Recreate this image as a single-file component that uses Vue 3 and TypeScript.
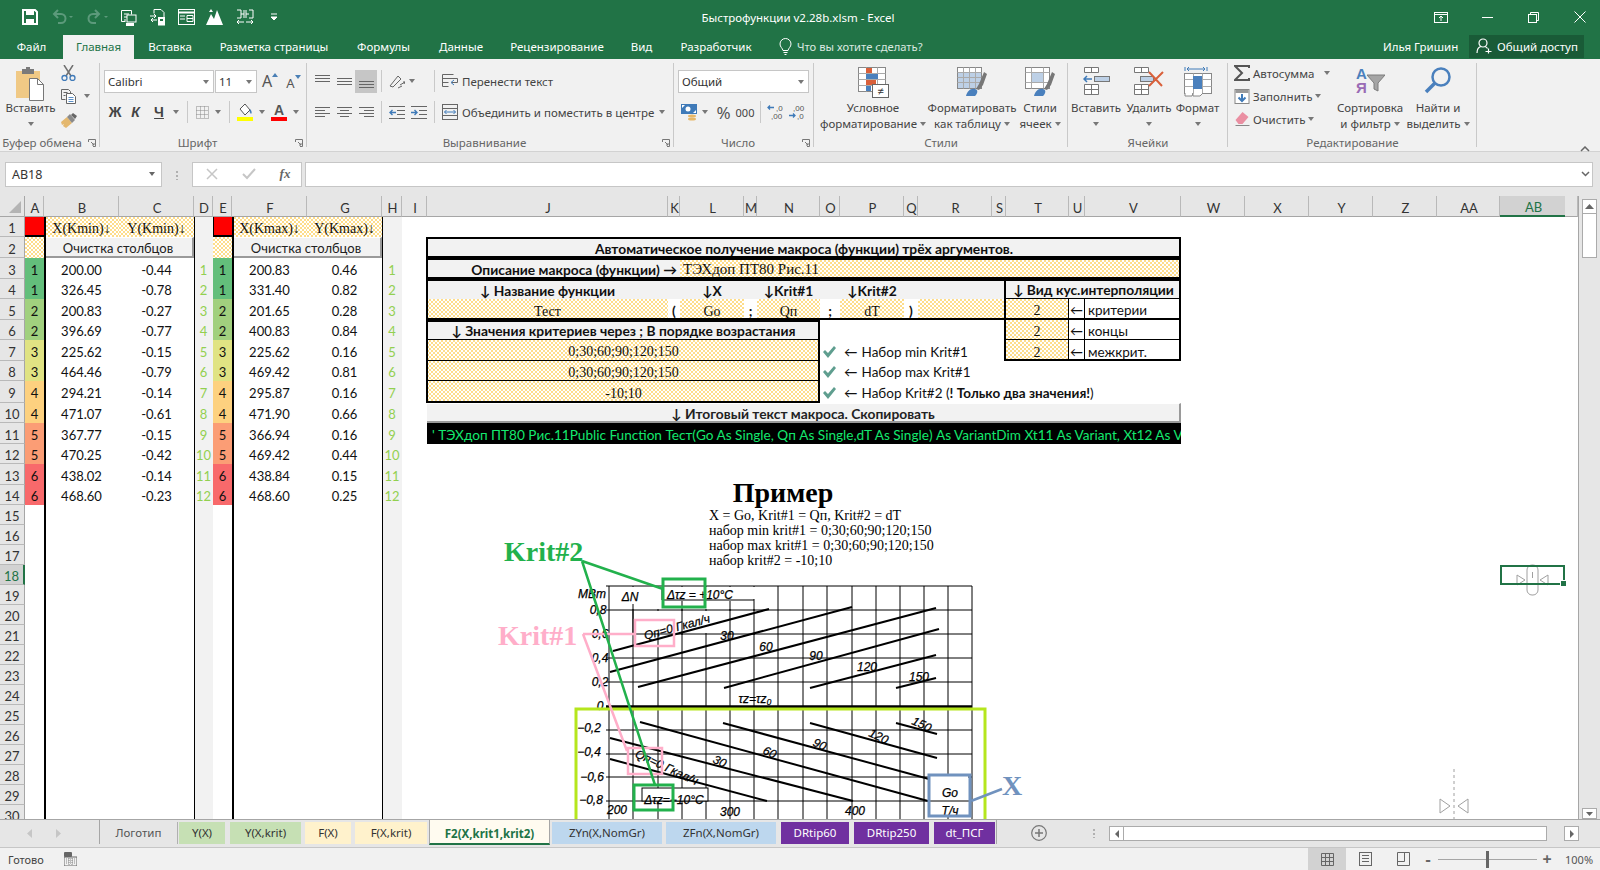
<script setup lang="ts">
type Col = [string, number]

const columns: Col[] = [
  ['A', 19], ['B', 75], ['C', 75], ['D', 19], ['E', 19], ['F', 75], ['G', 75], ['H', 20], ['I', 25],
  ['J', 241], ['K', 12], ['L', 64], ['M', 13], ['N', 63], ['O', 20], ['P', 64], ['Q', 14], ['R', 74],
  ['S', 14], ['T', 63], ['U', 16], ['V', 96], ['W', 64], ['X', 64], ['Y', 64], ['Z', 64], ['AA', 63],
  ['AB', 65], ['', 13],
]
const rowHeights = [20, 21, 21, 20, 21, 20, 21, 20, 22, 20, 21, 20, 21, 20, 20, 20, 20, 20, 20, 20, 20, 20, 20, 20, 20, 20, 20, 20, 20, 20]

const gridStyle = {
  gridTemplateColumns: '25px ' + columns.map((c) => c[1] + 'px').join(' '),
  gridTemplateRows: '21px ' + rowHeights.map((h) => h + 'px').join(' '),
}

const colLine = (name: string) => columns.findIndex((c) => c[0] === name) + 2

// place a cell on the sheet by column letters and row numbers
const place = (c1: string, c2: string, r1: number, r2: number = r1) => ({
  gridColumn: `${colLine(c1)} / ${colLine(c2) + 1}`,
  gridRow: `${r1 + 1} / ${r2 + 2}`,
})

const minData = [
  ['200.00', '-0.44'], ['326.45', '-0.78'], ['200.83', '-0.27'], ['396.69', '-0.77'],
  ['225.62', '-0.15'], ['464.46', '-0.79'], ['294.21', '-0.14'], ['471.07', '-0.61'],
  ['367.77', '-0.15'], ['470.25', '-0.42'], ['438.02', '-0.14'], ['468.60', '-0.23'],
]
const maxData = [
  ['200.83', '0.46'], ['331.40', '0.82'], ['201.65', '0.28'], ['400.83', '0.84'],
  ['225.62', '0.16'], ['469.42', '0.81'], ['295.87', '0.16'], ['471.90', '0.66'],
  ['366.94', '0.16'], ['469.42', '0.44'], ['438.84', '0.15'], ['468.60', '0.25'],
]
const scale = ['#63be7b', '#a1d07e', '#e0e383', '#fdd17f', '#fb9d75', '#f8696b']

const tableCells = [
  { pos: place('J', 'V', 2), cls: 'head bold', text: 'Автоматическое получение макроса (функции) трёх аргументов.' },
  { pos: place('J', 'K', 3), cls: 'head bold right', text: 'Описание макроса (функции) →' },
  { pos: place('L', 'V', 3), cls: 'hatch serif left big-serif', text: 'ТЭХдоп ПТ80 Рис.11' },
  { pos: place('J', 'S', 4), cls: 'head', text: '' },
  { pos: place('J', 'J', 4), cls: 'head bold', text: '↓ Название функции' },
  { pos: place('L', 'L', 4), cls: 'head bold', text: '↓X' },
  { pos: place('N', 'N', 4), cls: 'head bold', text: '↓Krit#1' },
  { pos: place('P', 'P', 4), cls: 'head bold', text: '↓Krit#2' },
  { pos: place('T', 'V', 4), cls: 'head bold line-b', text: '↓ Вид кус.интерполяции' },
  { pos: place('J', 'J', 5), cls: 'hatch serif', text: 'Тест' },
  { pos: place('K', 'K', 5), cls: 'bold', text: '(' },
  { pos: place('L', 'L', 5), cls: 'hatch serif', text: 'Go' },
  { pos: place('M', 'M', 5), cls: 'bold', text: ';' },
  { pos: place('N', 'N', 5), cls: 'hatch serif', text: 'Qп' },
  { pos: place('O', 'O', 5), cls: 'bold', text: ';' },
  { pos: place('P', 'P', 5), cls: 'hatch serif', text: 'dT' },
  { pos: place('Q', 'Q', 5), cls: 'bold', text: ')' },
  { pos: place('R', 'S', 5), cls: 'hatch', text: '' },
  { pos: place('J', 'N', 6), cls: 'head bold line-b', text: '↓ Значения критериев через ; В порядке возрастания' },
  { pos: place('J', 'N', 7), cls: 'hatch serif line-b', text: '0;30;60;90;120;150' },
  { pos: place('J', 'N', 8), cls: 'hatch serif line-b', text: '0;30;60;90;120;150' },
  { pos: place('J', 'N', 9), cls: 'hatch serif', text: '-10;10' },
  { pos: place('T', 'T', 5), cls: 'hatch serif line-b line-r', text: '2' },
  { pos: place('U', 'U', 5), cls: 'line-b line-r', text: '←' },
  { pos: place('V', 'V', 5), cls: 'left line-b mid', text: 'критерии' },
  { pos: place('T', 'T', 6), cls: 'hatch serif line-b line-r', text: '2' },
  { pos: place('U', 'U', 6), cls: 'line-b line-r', text: '←' },
  { pos: place('V', 'V', 6), cls: 'left line-b mid', text: 'концы' },
  { pos: place('T', 'T', 7), cls: 'hatch serif line-r', text: '2' },
  { pos: place('U', 'U', 7), cls: 'line-r', text: '←' },
  { pos: place('V', 'V', 7), cls: 'left mid', text: 'межкрит.' },
  { pos: place('J', 'V', 10), cls: 'btn bold', text: '↓ Итоговый текст макроса. Скопировать' },
]

const frames = [
  { pos: place('J', 'V', 2), cls: '' },
  { pos: place('J', 'V', 3), cls: '' },
  { pos: place('J', 'V', 4, 5), cls: '' },
  { pos: place('J', 'N', 6, 9), cls: '' },
  { pos: place('T', 'V', 4, 7), cls: 'wide' },
]

const notes = [
  { row: 7, text: 'Набор min Krit#1' },
  { row: 8, text: 'Набор max Krit#1' },
  { row: 9, text: 'Набор Krit#2 (' },
]

const macro = "' ТЭХдоп ПТ80 Рис.11Public Function Тест(Go As Single, Qп As Single,dT As Single) As VariantDim Xt11 As Variant, Xt12 As Variant"

const ribbonTabs = [
  { name: 'Файл', w: 63 }, { name: 'Главная', w: 71, on: true }, { name: 'Вставка', w: 72 },
  { name: 'Разметка страницы', w: 136 }, { name: 'Формулы', w: 83 }, { name: 'Данные', w: 72 },
  { name: 'Рецензирование', w: 120 }, { name: 'Вид', w: 49 }, { name: 'Разработчик', w: 100 },
]

const sheetTabs = [
  { name: 'Логотип', w: 78, gap: 0, cls: 'plain' },
  { name: 'Y(X)', w: 46, gap: 1, cls: 'green' },
  { name: 'Y(X,krit)', w: 71, gap: 5, cls: 'green' },
  { name: 'F(X)', w: 46, gap: 4, cls: 'cream' },
  { name: 'F(X,krit)', w: 72, gap: 4, cls: 'cream' },
  { name: 'F2(X,krit1,krit2)', w: 121, gap: 2, cls: 'active' },
  { name: 'ZYn(X,NomGr)', w: 110, gap: 2, cls: 'blue' },
  { name: 'ZFn(X,NomGr)', w: 110, gap: 4, cls: 'blue' },
  { name: 'DRtip60', w: 68, gap: 5, cls: 'purple' },
  { name: 'DRtip250', w: 75, gap: 5, cls: 'purple' },
  { name: 'dt_ПСГ', w: 61, gap: 5, cls: 'purple' },
]

const gridX = [609, 633, 658, 682, 706, 730, 754, 778, 803, 827, 852, 876, 900, 924, 948, 972]
const gridY = [587, 611, 635, 659, 683, 707, 731, 755, 778, 802]
const curves = [
  [613, 652, 769, 610], [610, 673, 852, 608], [638, 688, 936, 609], [724, 689, 939, 630], [810, 689, 936, 656], [896, 689, 936, 679],
  [610, 760, 767, 802], [610, 739, 853, 802], [640, 723, 928, 802], [723, 724, 940, 783], [810, 724, 937, 759], [896, 724, 937, 735],
]
const axisLabels = [
  { x: 592, y: 599, t: 'МВт' }, { x: 598, y: 615, t: '0,8' }, { x: 600, y: 639, t: '0,6' }, { x: 600, y: 663, t: '0,4' },
  { x: 600, y: 687, t: '0,2' }, { x: 600, y: 711, t: '0' }, { x: 589, y: 733, t: '−0,2' }, { x: 589, y: 757, t: '−0,4' },
  { x: 592, y: 782, t: '−0,6' }, { x: 591, y: 805, t: '−0,8' }, { x: 617, y: 815, t: '200' }, { x: 730, y: 817, t: '300' },
  { x: 855, y: 816, t: '400' }, { x: 950, y: 816, t: 'T/ч' }, { x: 950, y: 798, t: 'Go' }, { x: 630, y: 602, t: 'ΔN' },
  { x: 727, y: 641, t: '30' }, { x: 766, y: 652, t: '60' }, { x: 816, y: 661, t: '90' }, { x: 867, y: 672, t: '120' },
  { x: 919, y: 682, t: '150' }, { x: 755, y: 704, t: 'τz=τz₀' }, { x: 700, y: 600, t: 'Δτz = +10°C' }, { x: 674, y: 805, t: 'Δτz=−10°C' },
]
const curveLabels = [
  { x: 678, y: 632, a: -15, t: 'Qп=0 Гкал/ч' }, { x: 665, y: 772, a: 25, t: 'Qп=0 Гкал/ч' },
  { x: 718, y: 766, a: 25, t: '30' }, { x: 768, y: 757, a: 25, t: '60' }, { x: 818, y: 749, a: 25, t: '90' },
  { x: 877, y: 741, a: 25, t: '120' }, { x: 920, y: 729, a: 25, t: '150' },
]
</script>

<template>
  <div class="app">
    <header class="titlebar">
      <div class="qat">
        <svg width="16" height="16" viewBox="0 0 16 16"><path d="M1 1h12l2 2v12H1z" fill="none" stroke="#fff" stroke-width="2"/><rect x="4" y="1" width="8" height="5" fill="#fff"/><rect x="4" y="10" width="8" height="5" fill="#fff"/></svg>
        <svg class="dim" width="22" height="16" viewBox="0 0 22 16"><path d="M4 5h6a4 4 0 0 1 0 9H7M7 1L3 5l4 4" fill="none" stroke="#5c9a7b" stroke-width="2"/><path d="M18 7h4l-2 2z" fill="#5c9a7b"/></svg>
        <svg class="dim" width="22" height="16" viewBox="0 0 22 16"><path d="M12 5H7a4 4 0 0 0 0 9h3M9 1l4 4-4 4" fill="none" stroke="#5c9a7b" stroke-width="2"/><path d="M18 7h4l-2 2z" fill="#5c9a7b"/></svg>
        <svg width="17" height="17" viewBox="0 0 17 17"><path d="M1.5 1.5h10v4M1.5 1.5v11h4M4 5h5M4 8h3M4 11h2" fill="none" stroke="#fff"/><rect x="7" y="6" width="9" height="7" fill="none" stroke="#fff"/><rect x="6" y="14" width="8" height="3" fill="#fff"/></svg>
        <svg width="17" height="17" viewBox="0 0 17 17"><path d="M5 .5h7l3 3v5M5 .5v4" fill="none" stroke="#fff"/><path d="M1 7h6M5 5l2 2-2 2M8 11H2M4 9l-2 2 2 2" fill="none" stroke="#fff"/><rect x="9" y="8" width="7" height="8.5" fill="#fff"/><rect x="11" y="10" width="3" height="2" fill="#217346"/></svg>
        <svg width="17" height="16" viewBox="0 0 17 16"><rect x=".5" y=".5" width="16" height="15" fill="none" stroke="#fff"/><path d="M.5 3.5h16" stroke="#fff" stroke-width="2"/><path d="M2 7h5M2 10h5M9 6.500h6v6H9zM9 9.500h6" fill="none" stroke="#fff"/></svg>
        <svg width="17" height="16" viewBox="0 0 17 16"><path d="M0 16L5 5l3 5 3-9 6 15z" fill="#fff"/><path d="M3 3l2-3 2 3z" fill="#fff"/></svg>
        <svg width="18" height="17" viewBox="0 0 18 17"><path d="M1 1h4v8H1M5 5h3M13 1h4M13 9h4V1M10 5h3M8 1v8M10 1v8M1 13h7M3 11l-2 2 2 2M17 13h-7M15 11l2 2-2 2" fill="none" stroke="#fff"/></svg>
        <svg width="6" height="8" viewBox="0 0 6 8"><path d="M0 1h6M0 4h6l-3 3z" fill="none" stroke="#fff"/><path d="M0 4h6L3 7z" fill="#fff"/></svg>
      </div>
      <div class="doc-title">Быстрофункции v2.28b.xlsm - Excel</div>
      <div class="win-btns">
        <svg width="14" height="11" viewBox="0 0 14 11"><rect x=".5" y=".5" width="13" height="10" fill="none" stroke="#fff"/><path d="M.5 2.500h13M7 9V4.500M5 6l2-2 2 2" fill="none" stroke="#fff"/></svg>
        <svg width="11" height="11" viewBox="0 0 11 11"><path d="M0 5.500h11" stroke="#fff"/></svg>
        <svg width="11" height="11" viewBox="0 0 11 11"><rect x=".5" y="2.500" width="8" height="8" fill="none" stroke="#fff"/><path d="M2.500 2.500v-2h8v8h-2" fill="none" stroke="#fff"/></svg>
        <svg width="12" height="12" viewBox="0 0 12 12"><path d="M.5.5l11 11M11.500.5l-11 11" stroke="#fff"/></svg>
      </div>
    </header>

    <nav class="tabs">
      <div v-for="t in ribbonTabs" :key="t.name" class="tab" :class="{ on: t.on }" :style="{ width: t.w + 'px' }">{{ t.name }}</div>
      <div class="tell">
        <svg width="13" height="17" viewBox="0 0 13 17"><path d="M4 12.500C3.500 10 1 9 1 6a5.500 5.500 0 0 1 11 0c0 3-2.500 4-3 6.500zM4.500 14.500h4M5.500 16.500h2" fill="none" stroke="#fff"/></svg>
        <span>Что вы хотите сделать?</span>
      </div>
      <div class="user">Илья Гришин</div>
      <div class="share">
        <svg width="16" height="16" viewBox="0 0 16 16"><circle cx="7" cy="5" r="4" fill="none" stroke="#fff" stroke-width="1.200"/><path d="M1 15c0-4 2-6 4-6.500M9 8.500c1 .3 2 1 2.500 2M9.500 13.500h6M12.500 10.500v5" fill="none" stroke="#fff" stroke-width="1.200"/></svg>
        <span>Общий доступ</span>
      </div>
    </nav>

    <section class="ribbon">
      <!-- Буфер обмена -->
      <div class="group launch w-clip">
        <div class="body clip">
          <div class="big">
            <div class="big-ic">
              <svg width="30" height="34" viewBox="0 0 30 34"><rect x="0" y="4" width="24" height="27" fill="#f0c985"/><path d="M6 2h4V0h4v2h4v5H6z" fill="#7a7a7a"/><path d="M13.500 11.500h8l6 6v16h-14z" fill="#fff" stroke="#777"/><path d="M21.500 11.500v6h6" fill="none" stroke="#777"/></svg>
            </div>
            <div class="big-t">Вставить</div>
            <div class="big-t"><i class="caret" /></div>
          </div>
          <div class="clip-small">
            <svg width="15" height="16" viewBox="0 0 15 16"><path d="M3 0l7 11M12 0L5 11" stroke="#707070" stroke-width="1.500"/><circle cx="3.500" cy="13" r="2.500" fill="none" stroke="#3f7ab8" stroke-width="1.300"/><circle cx="11.500" cy="13" r="2.500" fill="none" stroke="#3f7ab8" stroke-width="1.300"/></svg>
            <div class="clip-copy">
              <svg width="16" height="15" viewBox="0 0 16 15"><path d="M.5.500h7l2 2v2M.5.500v10h4M2.500 3.500h4M2.500 6.500h2" fill="none" stroke="#666"/><path d="M5.500 4.500h6l3 3v7h-9z" fill="#fff" stroke="#666"/><path d="M7.500 8.500h5M7.500 10.500h5M7.500 12.500h5" stroke="#5b8fc7"/></svg>
              <i class="caret" />
            </div>
            <svg width="17" height="16" viewBox="0 0 17 16"><path d="M0 10l6-5 5 6-6 5-3-2 1-2-2 1z" fill="#e4b86f"/><path d="M6 5l5 6 3-3-5-6z" fill="#8a8a8a"/><path d="M12 1l4 3-2 3-4-4z" fill="#666"/></svg>
          </div>
        </div>
        <div class="label">Буфер обмена<svg class="launcher" width="8" height="8" viewBox="0 0 8 8"><path d="M.5 3V.500h7v7H5M3 3l3 3M6 4v2H4" fill="none" stroke="#777"/></svg></div>
      </div>

      <!-- Шрифт -->
      <div class="group launch w-font">
        <div class="body">
          <div class="rowg font1">
            <div class="select">Calibri<i class="caret" /></div>
            <div class="select">11<i class="caret" /></div>
            <div class="grow-a">A<svg width="6" height="4" viewBox="0 0 6 4"><path d="M0 4l3-4 3 4z" fill="#4a7fb5"/></svg></div>
            <div class="grow-a small">A<svg width="6" height="4" viewBox="0 0 6 4"><path d="M0 0l3 4 3-4z" fill="#4a7fb5"/></svg></div>
          </div>
          <div class="rowg font2">
            <b class="fmt">Ж</b>
            <b class="fmt it">К</b>
            <b class="fmt un">Ч</b>
            <i class="caret" />
            <i class="sep" />
            <svg width="13" height="13" viewBox="0 0 13 13"><path d="M.5.500h12v12H.5zM4.500.5v12M8.500.5v12M.5 4.500h12M.5 8.500h12" fill="none" stroke="#888" stroke-dasharray="1 1"/></svg>
            <i class="caret" />
            <i class="sep" />
            <svg width="16" height="18" viewBox="0 0 16 18"><path d="M3 6l5-5 5 6-5 5z" fill="#fff" stroke="#555"/><path d="M13 6c2 2 2 4 1 5-1-1-2-3-1-5z" fill="#3f7ab8"/><rect y="14" width="16" height="4" fill="#ff0"/></svg>
            <i class="caret" />
            <svg width="16" height="18" viewBox="0 0 16 18"><text x="8" y="12" text-anchor="middle" class="fc-a">A</text><rect y="14" width="16" height="4" fill="#f00"/></svg>
            <i class="caret" />
          </div>
        </div>
        <div class="label">Шрифт<svg class="launcher" width="8" height="8" viewBox="0 0 8 8"><path d="M.5 3V.500h7v7H5M3 3l3 3M6 4v2H4" fill="none" stroke="#777"/></svg></div>
      </div>

      <!-- Выравнивание -->
      <div class="group launch w-align">
        <div class="body">
          <div class="rowg al1">
            <svg width="15" height="13" viewBox="0 0 15 13"><path d="M0 .5h15M0 3.500h15M0 6.500h15" stroke="#666"/></svg>
            <svg width="15" height="13" viewBox="0 0 15 13"><path d="M0 3.500h15M0 6.500h15M0 9.500h15" stroke="#666"/></svg>
            <div class="al-on"><svg width="15" height="13" viewBox="0 0 15 13"><path d="M0 6.500h15M0 9.500h15M0 12.500h15" stroke="#666"/></svg></div>
            <i class="sep" />
            <svg width="16" height="16" viewBox="0 0 16 16"><path d="M1 13L9 3l3 3-8 8zM13 13l-4 2" fill="none" stroke="#666"/><path d="M11 12l5-3M14 9l2 0-1 2" fill="none" stroke="#666"/></svg>
            <i class="caret" />
            <i class="sep je" />
            <svg class="je" width="16" height="16" viewBox="0 0 16 16"><path d="M.5 1.500h11M.5 5.500h15v4h-6M.5 9.500h6M.5 13.500h6M.5 1.500v12" fill="none" stroke="#666"/><path d="M12 12l-3-2.500 3-2.500" fill="none" stroke="#3f7ab8"/></svg>
            <span class="rt">Перенести текст</span>
          </div>
          <div class="rowg al2">
            <svg width="15" height="13" viewBox="0 0 15 13"><path d="M0 1.500h15M0 4.500h10M0 7.500h15M0 10.500h10" stroke="#666"/></svg>
            <svg width="15" height="13" viewBox="0 0 15 13"><path d="M0 1.500h15M3 4.500h9M0 7.500h15M3 10.500h9" stroke="#666"/></svg>
            <svg width="15" height="13" viewBox="0 0 15 13"><path d="M0 1.500h15M5 4.500h10M0 7.500h15M5 10.500h10" stroke="#666"/></svg>
            <i class="sep" />
            <svg width="16" height="13" viewBox="0 0 16 13"><path d="M0 .5h16M8 4.500h8M8 8.500h8M0 12.500h16" stroke="#666"/><path d="M7 6.500H1M3.500 4l-2.500 2.500L3.500 9" fill="none" stroke="#3f7ab8" stroke-width="1.400"/></svg>
            <svg width="16" height="13" viewBox="0 0 16 13"><path d="M0 .5h16M8 4.500h8M8 8.500h8M0 12.500h16" stroke="#666"/><path d="M0 6.500h6M3.500 4L6 6.500 3.500 9" fill="none" stroke="#3f7ab8" stroke-width="1.400"/></svg>
            <i class="sep je" />
            <svg class="je" width="16" height="16" viewBox="0 0 16 16"><rect x=".5" y=".5" width="15" height="15" fill="none" stroke="#666"/><path d="M.5 4.500h15M.5 11.500h15" stroke="#666"/><path d="M2.500 8h11M4.500 6l-2 2 2 2M11.500 6l2 2-2 2" fill="none" stroke="#3f7ab8"/></svg>
            <span class="rt">Объединить и поместить в центре</span>
            <i class="caret" />
          </div>
        </div>
        <div class="label">Выравнивание<svg class="launcher" width="8" height="8" viewBox="0 0 8 8"><path d="M.5 3V.500h7v7H5M3 3l3 3M6 4v2H4" fill="none" stroke="#777"/></svg></div>
      </div>

      <!-- Число -->
      <div class="group launch w-num">
        <div class="body">
          <div class="rowg num1"><div class="select">Общий<i class="caret" /></div></div>
          <div class="rowg num2">
            <svg width="16" height="17" viewBox="0 0 16 17"><rect width="16" height="10" fill="#3f7ab8"/><circle cx="7" cy="5" r="2.500" fill="#fff"/><path d="M1 1l3 0-3 3zM15 9h-3l3-3z" fill="#fff"/><ellipse cx="11" cy="12" rx="4" ry="1.500" fill="#e8b868"/><ellipse cx="11" cy="15" rx="4" ry="1.500" fill="#e8b868"/></svg>
            <i class="caret" />
            <span class="pct">%</span>
            <span class="thou">000</span>
            <i class="sep" />
            <svg width="16" height="16" viewBox="0 0 16 16"><path d="M7 3.500H1M3 1.500l-2 2 2 2" fill="none" stroke="#3f7ab8" stroke-width="1.300"/><text x="9" y="7" class="dec">,0</text><text x="4" y="15" class="dec">,00</text></svg>
            <svg width="16" height="16" viewBox="0 0 16 16"><text x="4" y="7" class="dec">,00</text><path d="M0 11.500h6M4 9.500l2 2-2 2" fill="none" stroke="#3f7ab8" stroke-width="1.300"/><text x="8" y="15" class="dec">,0</text></svg>
          </div>
        </div>
        <div class="label">Число<svg class="launcher" width="8" height="8" viewBox="0 0 8 8"><path d="M.5 3V.500h7v7H5M3 3l3 3M6 4v2H4" fill="none" stroke="#777"/></svg></div>
      </div>

      <!-- Стили -->
      <div class="group w-styles">
        <div class="body bigs styles">
          <div class="big">
            <div class="big-ic">
              <svg width="31" height="31" viewBox="0 0 31 31"><rect x=".5" y=".5" width="27" height="24" fill="#fff" stroke="#888"/><path d="M.5 6.500h27M.5 12.500h27M.5 18.500h27M8.500.5v24M19.500.5v24" stroke="#aaa" fill="none"/><rect x="8" y="1" width="6" height="5" fill="#d9603b"/><rect x="8" y="7" width="12" height="5" fill="#4a80bd"/><rect x="8" y="13" width="10" height="5" fill="#d9603b"/><rect x="8" y="19" width="5" height="5" fill="#4a80bd"/><rect x="14.500" y="17.500" width="16" height="13" fill="#fff" stroke="#666"/><text x="22.500" y="28" text-anchor="middle" class="ne">≠</text></svg>
            </div>
            <div class="big-t">Условное</div>
            <div class="big-t">форматирование<i class="caret mlc" /></div>
          </div>
          <div class="big">
            <div class="big-ic">
              <svg width="30" height="29" viewBox="0 0 30 29"><rect x=".5" y=".5" width="24" height="21" fill="#fff" stroke="#888"/><rect x="1" y="6" width="23" height="15" fill="#bdd0e6"/><path d="M.5 5.500h24M.5 10.500h24M.5 15.500h24M6.500.5v21M12.500.5v21M18.500.5v21" stroke="#aaa" fill="none"/><path d="M19 22l3-5 5-12 3 2-4 11-4 5z" fill="#777"/><path d="M9 29c1-4 4-8 9-7 4 1 2 5 0 7z" fill="#4a80bd"/></svg>
            </div>
            <div class="big-t">Форматировать</div>
            <div class="big-t">как таблицу<i class="caret mlc" /></div>
          </div>
          <div class="big">
            <div class="big-ic">
              <svg width="30" height="29" viewBox="0 0 30 29"><rect x=".5" y=".5" width="24" height="21" fill="#fff" stroke="#888"/><rect x="6" y="6" width="13" height="10" fill="#bdd0e6"/><path d="M.5 5.500h24M.5 15.500h24M6.500.5v21M18.500.5v21" stroke="#aaa" fill="none"/><path d="M19 22l3-5 5-12 3 2-4 11-4 5z" fill="#777"/><path d="M9 29c1-4 4-8 9-7 4 1 2 5 0 7z" fill="#4a80bd"/></svg>
            </div>
            <div class="big-t">Стили</div>
            <div class="big-t">ячеек<i class="caret mlc" /></div>
          </div>
        </div>
        <div class="label">Стили</div>
      </div>

      <!-- Ячейки -->
      <div class="group w-cells">
        <div class="body bigs cells">
          <div class="big">
            <div class="big-ic">
              <svg width="27" height="28" viewBox="0 0 27 28"><path d="M1.500.5h14v5h-14zM8.500.5v5M1.500 17.500h14v10h-14zM1.500 22.500h14M8.500 17.500v10" fill="#fff" stroke="#777"/><rect x="11.500" y="9.500" width="15" height="5" fill="#bdd0e6" stroke="#777"/><path d="M9 12H1M4 9l-3 3 3 3" fill="none" stroke="#3f7ab8" stroke-width="1.500"/></svg>
            </div>
            <div class="big-t">Вставить</div>
            <div class="big-t"><i class="caret" /></div>
          </div>
          <div class="big">
            <div class="big-ic">
              <svg width="30" height="28" viewBox="0 0 30 28"><path d="M.5.5h14v5H.5zM7.500.5v5M.5 17.500h14v10H.5zM.5 22.500h14M7.500 17.500v10" fill="#fff" stroke="#777"/><rect x="6.500" y="9.500" width="13" height="5" fill="#bdd0e6" stroke="#777"/><path d="M15 5l13 14M29 5L15 19" stroke="#d9603b" stroke-width="2"/></svg>
            </div>
            <div class="big-t">Удалить</div>
            <div class="big-t"><i class="caret" /></div>
          </div>
          <div class="big">
            <div class="big-ic ic-up">
              <svg width="28" height="31" viewBox="0 0 28 31"><path d="M1 1v4M23 1v4M3 3h18M5 1L3 3l2 2M19 1l2 2-2 2" fill="none" stroke="#3f7ab8"/><rect x=".5" y="7.500" width="27" height="20" fill="#fff" stroke="#888"/><path d="M.5 13.500h27M.5 20.500h27M9.500 7.500v20M18.500 7.500v20" stroke="#aaa" fill="none"/><rect x="9" y="10" width="9" height="13" fill="#4a80bd"/><path d="M1 27v3h7l1-3M9 27v3h7l3-3" fill="#fff" stroke="#888"/></svg>
            </div>
            <div class="big-t">Формат</div>
            <div class="big-t"><i class="caret" /></div>
          </div>
        </div>
        <div class="label">Ячейки</div>
      </div>

      <!-- Редактирование -->
      <div class="group w-edit">
        <div class="body edit">
          <div class="edit-list">
            <div class="edit-row">
              <svg width="16" height="16" viewBox="0 0 16 16"><path d="M15 3V1H1l7 7-7 7h14v-2" fill="none" stroke="#555" stroke-width="2"/></svg>
              <span>Автосумма</span><i class="caret far" />
            </div>
            <div class="edit-row">
              <svg width="15" height="15" viewBox="0 0 15 15"><rect x=".5" y=".5" width="14" height="14" fill="#fff" stroke="#888"/><rect x="1" y="1" width="13" height="3" fill="#999"/><path d="M7.500 5v7M4 8.500l3.500 3.500L11 8.500" fill="none" stroke="#3f7ab8" stroke-width="2"/></svg>
              <span>Заполнить</span><i class="caret near" />
            </div>
            <div class="edit-row">
              <svg width="15" height="14" viewBox="0 0 15 14"><path d="M1 8l7-8 6 5-6 7H4z" fill="#ea8fa2"/><path d="M1 13.500h14" stroke="#888"/></svg>
              <span>Очистить</span><i class="caret near" />
            </div>
          </div>
          <div class="big">
            <div class="big-ic">
              <svg width="30" height="27" viewBox="0 0 30 27"><text x="1" y="12" class="sort-a">A</text><text x="1" y="26" class="sort-b">Я</text><path d="M12 8h18l-7 8v8l-4-2v-6z" fill="#a5a5a5" stroke="#7c7c7c"/></svg>
            </div>
            <div class="big-t">Сортировка</div>
            <div class="big-t">и фильтр<i class="caret mlc" /></div>
          </div>
          <div class="big">
            <div class="big-ic">
              <svg width="28" height="27" viewBox="0 0 28 27"><circle cx="17" cy="10" r="8.500" fill="none" stroke="#4a80bd" stroke-width="2.500"/><path d="M11 16L2 25" stroke="#4a80bd" stroke-width="3.500"/></svg>
            </div>
            <div class="big-t">Найти и</div>
            <div class="big-t">выделить<i class="caret mlc" /></div>
          </div>
        </div>
        <div class="label">Редактирование</div>
      </div>

      <div class="collapse">
        <svg width="10" height="6" viewBox="0 0 10 6"><path d="M1 5l4-4 4 4" fill="none" stroke="#666" stroke-width="1.500"/></svg>
      </div>
    </section>

    <section class="formula">
      <div class="namebox">AB18<i class="caret dark" /></div>
      <div class="dots" />
      <div class="fx-btns">
        <svg width="12" height="12" viewBox="0 0 12 12"><path d="M1 1l10 10M11 1L1 11" stroke="#c6c6c6" stroke-width="1.500"/></svg>
        <svg width="14" height="12" viewBox="0 0 14 12"><path d="M1 6l4 4 8-9" fill="none" stroke="#c6c6c6" stroke-width="2"/></svg>
        <span class="fx">fx</span>
      </div>
      <div class="f-input"><svg width="9" height="6" viewBox="0 0 9 6"><path d="M1 1l3.500 3.500L8 1" fill="none" stroke="#666" stroke-width="1.500"/></svg></div>
    </section>

    <main class="sheet-wrap">
      <div class="sheet" :style="gridStyle">
        <!-- headers -->
        <div class="corner"><svg width="12" height="12" viewBox="0 0 12 12"><path d="M12 0v12H0z" fill="#b4b4b4"/></svg></div>
        <div
          v-for="c in columns"
          :key="'c' + c[0]"
          class="ch"
          :class="{ sel: c[0] === 'AB' }"
          :style="{ gridColumn: colLine(c[0]), gridRow: 1 }"
        >{{ c[0] }}</div>
        <div
          v-for="(h, i) in rowHeights"
          :key="'r' + i"
          class="rh"
          :class="{ sel: i === 17 }"
          :style="{ gridColumn: 1, gridRow: i + 2 }"
        >{{ i + 1 }}</div>

        <!-- grey spacer columns -->
        <div class="cell band" :style="place('D', 'D', 1, 30)" />
        <div class="cell band" :style="place('H', 'H', 1, 30)" />

        <!-- left blocks -->
        <div class="cell red" :style="place('A', 'A', 1)" />
        <div class="cell hatch" :style="place('A', 'A', 2)" />
        <div class="cell hatch serif" :style="place('B', 'B', 1)">X(Kmin)↓</div>
        <div class="cell hatch serif" :style="place('C', 'C', 1)">Y(Kmin)↓</div>
        <div class="cell btn" :style="place('B', 'C', 2)">Очистка столбцов</div>
        <div class="cell red e" :style="place('E', 'E', 1)" />
        <div class="cell hatch" :style="place('E', 'E', 2)" />
        <div class="cell hatch serif" :style="place('F', 'F', 1)">X(Kmax)↓</div>
        <div class="cell hatch serif" :style="place('G', 'G', 1)">Y(Kmax)↓</div>
        <div class="cell btn" :style="place('F', 'G', 2)">Очистка столбцов</div>
        <template v-for="(row, i) in minData" :key="'m' + i">
          <div class="cell" :style="[place('A', 'A', i + 3), { background: scale[Math.floor(i / 2)] }]">{{ Math.floor(i / 2) + 1 }}</div>
          <div class="cell" :style="place('B', 'B', i + 3)">{{ row[0] }}</div>
          <div class="cell" :style="place('C', 'C', i + 3)">{{ row[1] }}</div>
          <div class="cell lime" :style="place('D', 'D', i + 3)">{{ i + 1 }}</div>
          <div class="cell" :style="[place('E', 'E', i + 3), { background: scale[Math.floor(i / 2)] }]">{{ Math.floor(i / 2) + 1 }}</div>
          <div class="cell" :style="place('F', 'F', i + 3)">{{ maxData[i][0] }}</div>
          <div class="cell" :style="place('G', 'G', i + 3)">{{ maxData[i][1] }}</div>
          <div class="cell lime" :style="place('H', 'H', i + 3)">{{ i + 1 }}</div>
        </template>

        <!-- macro form -->
        <div v-for="(c, i) in tableCells" :key="'t' + i" class="cell" :class="c.cls" :style="c.pos">{{ c.text }}</div>
        <div class="cell macro" :style="place('J', 'V', 11)"><span>{{ macro }}</span></div>
        <div v-for="n in notes" :key="n.row" class="cell note" :style="place('O', n.row === 7 ? 'S' : 'V', n.row)">
          <svg width="14" height="14" viewBox="0 0 14 14"><path d="M1 7l2-2 3 3 6-7 2 2-8 10z" fill="#5f9e8f"/></svg>
          <span class="note-arrow">←</span>
          <span>{{ n.text }}<template v-if="n.row === 9"><b>! Только два значения!</b>)</template></span>
        </div>
        <div v-for="(f, i) in frames" :key="'f' + i" class="frame" :class="f.cls" :style="f.pos" />

        <!-- column rules -->
        <div class="vline thick" :style="place('B', 'B', 1, 30)" />
        <div class="vline" :style="place('D', 'D', 1, 30)" />
        <div class="vline thick" :style="place('F', 'F', 1, 30)" />
        <div class="vline" :style="place('H', 'H', 1, 30)" />

        <div class="active-cell" :style="place('AB', 'AB', 18)"><i /></div>

        <!-- picture on the sheet, drawn in page coordinates -->
        <svg class="picture" :style="place('I', '', 13, 30)" width="1176" height="361" viewBox="402 465 1176 361">
          <text x="783" y="503" text-anchor="middle" class="pic-title">Пример</text>
          <text x="709" y="521" class="pic-line">X = Go, Krit#1 = Qп, Krit#2 = dT</text>
          <text x="709" y="536" class="pic-line">набор min krit#1 = 0;30;60;90;120;150</text>
          <text x="709" y="551" class="pic-line">набор max krit#1 = 0;30;60;90;120;150</text>
          <text x="709" y="566" class="pic-line">набор krit#2 = -10;10</text>

          <path v-for="x in gridX" :key="'gx' + x" :d="`M${x} 587V826`" stroke="#000" stroke-width="1" />
          <path v-for="y in gridY" :key="'gy' + y" :d="`M606 ${y}H972`" stroke="#000" stroke-width="1" />
          <path d="M606 708H972" stroke="#000" stroke-width="3" />
          <path d="M610 588H776V610H610zM634 612H776V634H634z" fill="#fff" />
          <path d="M633 605V636M682 602V636M730 602V636M754 600V636M662 590V601H754" fill="none" stroke="#000" />
          <path v-for="(l, i) in curves" :key="'cv' + i" :d="`M${l[0]} ${l[1]}L${l[2]} ${l[3]}`" stroke="#000" stroke-width="2" />
          <rect x="642" y="789" width="66" height="13" fill="#fff" stroke="#000" />
          <rect x="930" y="776" width="38" height="40" fill="#fff" />
          <path d="M930 802H968" stroke="#000" />
          <text v-for="a in axisLabels" :key="a.t + a.x" :x="a.x" :y="a.y" text-anchor="middle" class="hand">{{ a.t }}</text>
          <text v-for="c in curveLabels" :key="c.t + c.x" :transform="`translate(${c.x} ${c.y}) rotate(${c.a})`" text-anchor="middle" class="hand">{{ c.t }}</text>

          <rect x="576" y="710" width="409" height="130" fill="none" stroke="#b5e61d" stroke-width="3" />
          <path d="M583 635H634M583 635L627 752" fill="none" stroke="#ffaec9" stroke-width="2.500" />
          <rect x="635" y="621" width="39" height="26" fill="none" stroke="#ffaec9" stroke-width="2.500" />
          <rect x="628" y="749" width="34" height="26" fill="none" stroke="#ffaec9" stroke-width="2.500" />
          <path d="M582 562L663 590M582 562L655 786" fill="none" stroke="#22b14c" stroke-width="2.500" />
          <rect x="663" y="580" width="42" height="28" fill="none" stroke="#22b14c" stroke-width="3" />
          <rect x="634" y="786" width="39" height="25" fill="none" stroke="#22b14c" stroke-width="3" />
          <rect x="929" y="776" width="41" height="41" fill="none" stroke="#7092be" stroke-width="3" />
          <path d="M971 802L1002 790" stroke="#7092be" stroke-width="2.500" />
          <text x="504" y="562" class="krit k2">Krit#2</text>
          <text x="498" y="646" class="krit k1">Krit#1</text>
          <text x="1002" y="796" class="krit kx">X</text>

          <!-- autoscroll cursors -->
          <g fill="none" stroke="#a0a0a0">
            <rect x="1527" y="566" width="11" height="30" rx="5" fill="#fff" />
            <path d="M1532.500 573v6" />
            <path d="M1525 581l-8-5v10zM1540 581l8-5v10z" fill="#fff" />
            <path d="M1454 770V822" stroke-dasharray="3 3" />
            <path d="M1450 807l-10-7v14zM1458 807l10-7v14z" fill="#fff" />
          </g>
        </svg>
      </div>
      <aside class="vscroll">
        <div class="sb-btn up"><svg width="9" height="5" viewBox="0 0 9 5"><path d="M0 5l4.500-5L9 5z" fill="#666"/></svg></div>
        <div class="sb-thumb" />
        <div class="sb-track" />
        <div class="sb-btn dn"><svg width="7" height="4" viewBox="0 0 7 4"><path d="M0 0l3.500 4L7 0z" fill="#666"/></svg></div>
      </aside>
    </main>

    <section class="tabbar">
      <div class="nav-arrows">
        <svg width="5" height="9" viewBox="0 0 5 9"><path d="M5 0v9L0 4.500z" fill="#c6c6c6"/></svg>
        <svg width="5" height="9" viewBox="0 0 5 9"><path d="M0 0v9l5-4.500z" fill="#c6c6c6"/></svg>
      </div>
      <div class="sheet-tabs">
        <div
          v-for="t in sheetTabs"
          :key="t.name"
          class="stab"
          :class="t.cls"
          :style="{ width: t.w + 'px', marginLeft: t.gap + 'px' }"
        >{{ t.name }}</div>
      </div>
      <div class="add-tab"><svg width="16" height="16" viewBox="0 0 16 16"><circle cx="8" cy="8" r="7.300" fill="none" stroke="#777" stroke-width="1.200"/><path d="M8 4v8M4 8h8" stroke="#777" stroke-width="1.500"/></svg></div>
      <div class="dots tab-dots" />
      <div class="hscroll">
        <div class="sb-btn"><svg width="4" height="8" viewBox="0 0 4 8"><path d="M4 0v8L0 4z" fill="#666"/></svg></div>
        <div class="sb-thumb h" />
        <div class="sb-track" />
        <div class="sb-btn"><svg width="4" height="8" viewBox="0 0 4 8"><path d="M0 0v8l4-4z" fill="#666"/></svg></div>
      </div>
    </section>

    <footer class="status">
      <span class="ready">Готово</span>
      <svg width="13" height="14" viewBox="0 0 13 14"><rect y="5" width="13" height="9" fill="none" stroke="#666"/><path d="M2 7h9M2 9h9M2 11h9M5 6v7M8 6v7" stroke="#888" stroke-dasharray="1 1"/><rect width="8" height="5" rx="1" fill="#666"/></svg>
      <div class="views">
        <div class="view on"><svg width="13" height="13" viewBox="0 0 13 13"><path d="M.5.5h12v12H.5zM4.500.5v12M8.500.5v12M.5 4.500h12M.5 8.500h12" fill="none" stroke="#666"/></svg></div>
        <div class="view"><svg width="13" height="14" viewBox="0 0 13 14"><rect x=".5" y=".5" width="12" height="13" fill="none" stroke="#666"/><path d="M3 3.500h7M3 6.500h7M3 9.500h7" stroke="#666"/></svg></div>
        <div class="view"><svg width="13" height="14" viewBox="0 0 13 14"><path d="M.5.5h12v13H.5zM.5 9.500h7V.5" fill="none" stroke="#666"/></svg></div>
      </div>
      <div class="zoom">
        <span class="z-btn">-</span>
        <div class="z-track"><i /></div>
        <span class="z-btn">+</span>
      </div>
      <span class="pct-zoom">100%</span>
    </footer>
  </div>
</template>

<style>
html, body { margin: 0; overflow: hidden; background: #f1f1f1; }
</style>

<style scoped>
.app {
  width: 1600px;
  height: 870px;
  display: flex;
  flex-direction: column;
  overflow: hidden;
  font-family: "Noto Sans", "Open Sans", sans-serif;
  font-size: 11.5px;
  color: #444;
}

/* title bar */
.titlebar {
  height: 35px;
  background: #217346;
  color: #fff;
  display: grid;
  grid-template-columns: 1fr auto 1fr;
  align-items: center;
}
.qat {
  display: grid;
  grid-template-columns: 29px 35px 34px 29px 29px 28px 30px 35px auto;
  padding-left: 22px;
  align-items: center;
  justify-content: start;
}
.doc-title { padding-right: 4px; }
.win-btns {
  display: grid;
  grid-template-columns: 48px 46px 46px auto;
  justify-content: end;
  padding-right: 14px;
  align-items: center;
}

/* ribbon tabs */
.tabs {
  height: 24px;
  background: #217346;
  color: #fff;
  display: flex;
  align-items: stretch;
}
.tab {
  text-align: center;
  line-height: 24px;
  white-space: nowrap;
}
.tab.on { background: #f1f1f1; color: #217346; }
.tell {
  margin-left: 13px;
  display: flex;
  align-items: center;
  gap: 5px;
  color: #dbe9e1;
  font-size: 11.200px;
}
.user {
  margin-left: auto;
  line-height: 24px;
  width: 86px;
}
.share {
  width: 115px;
  margin-right: 16px;
  height: 23px;
  background: #195b37;
  display: flex;
  align-items: center;
  gap: 5px;
  padding-left: 7px;
  box-sizing: border-box;
}

/* ribbon */
.ribbon {
  height: 93px;
  box-sizing: border-box;
  background: #f1f1f1;
  border-bottom: 1px solid #d2d2d2;
  display: flex;
  padding-top: 4px;
}
.group {
  position: relative;
  box-sizing: border-box;
  height: 88px;
  display: flex;
  flex-direction: column;
  flex: none;
}
.group::after {
  content: "";
  position: absolute;
  right: 0;
  top: 0;
  bottom: 4px;
  width: 1px;
  background: #c9c9c9;
}
.w-clip { width: 100px; }
.w-font { width: 207px; padding-left: 4px; }
.w-align { width: 367px; padding-left: 4px; }
.w-num { width: 140px; padding-left: 4px; }
.w-styles { width: 254px; }
.w-cells { width: 160px; }
.w-edit { width: 249px; }
.body {
  height: 71px;
  flex: none;
  box-sizing: border-box;
  padding-top: 7px;
}
.label {
  position: relative;
  height: 17px;
  line-height: 18px;
  text-align: center;
  color: #666;
  white-space: nowrap;
}
.launch .label { padding-right: 16px; }
.launcher {
  position: absolute;
  right: 4px;
  top: 5px;
}
.caret {
  display: inline-block;
  width: 0;
  height: 0;
  border-left: 3.5px solid transparent;
  border-right: 3.5px solid transparent;
  border-top: 4px solid #777;
  vertical-align: middle;
}
.caret.dark { border-top-color: #666; }
.caret.mlc { margin-left: 3px; border-left-width: 3px; border-right-width: 3px; }
.sep {
  display: block;
  width: 1px;
  height: 22px;
  background: #c9c9c9;
}
.je { justify-self: end; }
.rowg {
  display: grid;
  height: 23px;
  align-items: center;
  justify-items: center;
  justify-content: start;
}
.rowg + .rowg { margin-top: 8px; }
.select {
  justify-self: stretch;
  height: 23px;
  box-sizing: border-box;
  border: 1px solid #c6c6c6;
  background: #fff;
  padding-top: 1px;
  padding-left: 3px;
  font-size: 11.5px;
  color: #333;
  display: flex;
  align-items: center;
  justify-content: space-between;
  padding-right: 4px;
}

.big {
  display: flex;
  flex-direction: column;
  align-items: center;
  white-space: nowrap;
  color: #444;
}
.big-ic {
  height: 37px;
  margin-top: -7px;
  display: flex;
  align-items: flex-start;
  padding-top: 4px;
  box-sizing: border-box;
}
.big-ic.ic-up { padding-top: 3px; }
.big-t { height: 16px; line-height: 16px; }

.clip {
  display: grid;
  grid-template-columns: 49px auto;
  padding-left: 6px;
  column-gap: 6px;
}
.clip-small {
  display: flex;
  flex-direction: column;
  gap: 8px;
  margin-top: -5px;
}
.clip-copy { display: flex; align-items: center; gap: 7px; }

.font1 { grid-template-columns: 111px 42px 26px 21px; }
.font1 .select:first-child { margin-right: 1px; }
.font2 { grid-template-columns: 22px 19px 28px 6px 16px 14px 18px 4px 28px 5px 30px 4px; }
.fmt { font-size: 14px; color: #444; font-family: "Liberation Sans", sans-serif; }
.fmt.it { font-style: italic; }
.fmt.un { text-decoration: underline; }
.grow-a {
  font-size: 16px;
  line-height: 16px;
  color: #555;
  display: flex;
  align-items: flex-start;
}
.grow-a.small { font-size: 13px; padding-top: 3px; }
.fc-a { font: bold 14px "Liberation Sans", sans-serif; fill: #555; }

.al1 { grid-template-columns: 23px 21px 22px 8px 24px 5px 21px 23px auto; margin-left: 0; }
.al2 { grid-template-columns: 23px 21px 22px 8px 24px 19px 7px 23px auto 16px; }
.al1 .sep, .al2 .sep { height: 22px; }
.al-on {
  width: 22px;
  height: 23px;
  background: #c6c6c6;
  display: flex;
  align-items: center;
  justify-content: center;
}
.rt { justify-self: start; padding-left: 4px; white-space: nowrap; color: #444; }

.num1 { grid-template-columns: 131px; }
.num2 { grid-template-columns: 22px 10px 27px 16px 14px 16px 28px; }
.pct { font-size: 17px; color: #555; }
.thou { font-size: 11px; color: #444; }
.dec { font: 8px "Liberation Sans", sans-serif; fill: #555; }

.bigs, .edit { display: grid; justify-content: start; }
.styles { grid-template-columns: 114px 84px 52px; padding-left: 2px; }
.cells { grid-template-columns: 56px 50px 47px; padding-left: 0; }
.ne { font: 11px "Liberation Sans", sans-serif; fill: #333; }

.edit {
  grid-template-columns: 102px 68px 68px;
  padding-left: 6px;
}
.edit-list {
  display: flex;
  flex-direction: column;
  gap: 4px;
  margin-top: -6px;
}
.edit-row {
  display: flex;
  align-items: center;
  height: 19px;
  white-space: nowrap;
}
.edit-row svg { flex: none; width: 16px; }
.edit-row span { margin-left: 3px; }
.caret.far { margin-left: 10px; }
.caret.near { margin-left: 3px; }
.sort-a { font: bold 15px "Liberation Sans", sans-serif; fill: #4a80bd; }
.sort-b { font: bold 15px "Liberation Sans", sans-serif; fill: #9a6bb5; }
.collapse {
  margin-left: auto;
  padding: 77px 10px 0 0;
}

/* formula bar */
.formula {
  height: 45px;
  background: #e6e6e6;
  display: flex;
  padding: 10px 7px 0 5px;
  box-sizing: border-box;
  align-items: flex-start;
}
.namebox {
  width: 157px;
  height: 25px;
  box-sizing: border-box;
  border: 1px solid #c6c6c6;
  background: #fff;
  color: #333;
  font-size: 12.500px;
  line-height: 23px;
  padding: 0 6px;
  display: flex;
  align-items: center;
  justify-content: space-between;
}
.dots {
  width: 2px;
  height: 9px;
  margin: 9px 14px 0;
  background: repeating-linear-gradient(#b0b0b0 0 2px, transparent 2px 4px);
}
.fx-btns {
  width: 110px;
  height: 25px;
  box-sizing: border-box;
  border: 1px solid #c6c6c6;
  background: #fff;
  display: grid;
  grid-template-columns: 36px 37px 36px;
  justify-items: center;
  align-items: center;
  padding-left: 1px;
  margin-right: 3px;
}
.fx { font: italic bold 13px "Liberation Serif", serif; color: #666; }
.f-input {
  flex: 1;
  height: 25px;
  box-sizing: border-box;
  border: 1px solid #c6c6c6;
  background: #fff;
  display: flex;
  align-items: center;
  justify-content: flex-end;
  padding-right: 2px;
}

/* sheet */
.sheet-wrap {
  height: 623px;
  flex: none;
  overflow: hidden;
  background: #e6e6e6;
  display: flex;
}
.sheet {
  display: grid;
  width: 1579px;
  flex: none;
  align-content: start;
  background:
    linear-gradient(#e6e6e6 0 21px, #fff 21px);
  border-right: 1px solid #a6a6a6;
  box-sizing: border-box;
  font-family: "Lato", "Noto Sans", sans-serif;
  font-size: 13px;
  color: #111;
}
.corner {
  grid-column: 1;
  grid-row: 1;
  display: flex;
  align-items: flex-end;
  justify-content: flex-end;
  padding: 0 3px 3px 0;
  box-sizing: border-box;
  border-right: 1px solid #a6a6a6;
  border-bottom: 1px solid #a6a6a6;
}
.ch, .rh {
  box-sizing: border-box;
  background: #e6e6e6;
  color: #333;
  font-size: 13px;
  display: flex;
  align-items: center;
  justify-content: center;
  padding-top: 3px;
}
.ch { border-right: 1px solid #b9b9b9; border-bottom: 1px solid #a6a6a6; padding-left: 2px; }
.rh { border-bottom: 1px solid #b9b9b9; border-right: 1px solid #a6a6a6; }
.ch.sel { background: #d2d2d2; color: #217346; border-bottom: 2px solid #217346; border-right: none; }
.rh.sel { background: #d2d2d2; color: #217346; border-right: 2px solid #217346; }
.cell {
  box-sizing: border-box;
  display: flex;
  align-items: center;
  justify-content: center;
  white-space: nowrap;
  overflow: hidden;
  min-width: 0;
  padding-top: 2px;
}
.band { background: #f2f2f2; }
.lime { color: #92d050; }
.red {
  background: #f00;
  border-bottom: 2px solid #000;
}
.red.e { border-left: 1px solid #000; border-right: none; }
.hatch {
  background: repeating-conic-gradient(#fedd8a 0 25%, #fff 0 50%) 0 0 / 4px 4px;
}
.serif { font-family: "Liberation Serif", serif; font-size: 14px; padding-top: 4px; }
.big-serif { font-size: 15px; padding-top: 2px; }
.btn {
  background: #f2f2f2;
  border-bottom: 2px solid #9a9a9a;
  border-right: 2px solid #9a9a9a;
  border-top: 1px solid #fff;
  color: #222;
  padding-top: 1px;
}
.head { background: #f2f2f2; }
.bold { font-weight: 700; font-size: 13.800px; }
.mid { font-size: 13.500px; }
.right { justify-content: flex-end; padding-right: 3px; }
.left { justify-content: flex-start; padding-left: 3px; }
.line-b { border-bottom: 1px solid #000; }
.line-r { border-right: 1px solid #000; }
.macro {
  background: #000;
  color: #14e86e;
  justify-content: flex-start;
  padding-left: 5px;
  overflow: hidden;
  font-size: 13.600px;
}
.note {
  justify-content: flex-start;
  padding-left: 2px;
  overflow: visible;
  font-size: 13.500px;
}
.note svg { flex: none; }
.note-arrow { margin: 0 4px 0 8px; }
.frame {
  border: 2px solid #000;
  box-sizing: border-box;
  margin-left: -1px;
  pointer-events: none;
}
.frame.wide { margin-left: -2px; }
.vline {
  border-left: 1px solid #000;
  pointer-events: none;
}
.vline.thick { border-left-width: 2px; }
.active-cell {
  position: relative;
  border: 2px solid #217346;
  box-sizing: border-box;
}
.active-cell i {
  position: absolute;
  right: -4px;
  bottom: -4px;
  width: 5px;
  height: 5px;
  background: #217346;
  border: 1px solid #fff;
}
.picture { display: block; pointer-events: none; }
.pic-title { font: 700 28px "Liberation Serif", serif; fill: #000; }
.pic-line { font: 14px "Liberation Serif", serif; fill: #000; }
.hand { font: italic 400 12px "Liberation Sans", sans-serif; fill: #000; stroke: #000; stroke-width: .25px; }
.krit { font: 700 28px "Liberation Serif", serif; }
.k2 { fill: #22b14c; }
.k1 { fill: #ffaec9; }
.kx { fill: #7092be; }

.vscroll {
  width: 15px;
  margin-left: 3px;
  margin-top: 3px;
  display: flex;
  flex-direction: column;
}
.sb-btn {
  background: #fff;
  border: 1px solid #ababab;
  box-sizing: border-box;
  display: flex;
  align-items: center;
  justify-content: center;
  flex: none;
}
.sb-btn.up { height: 15px; }
.sb-btn.dn { height: 11px; }
.sb-thumb {
  height: 44px;
  background: #fff;
  border: 1px solid #ababab;
  border-top: none;
  box-sizing: border-box;
  flex: none;
}
.sb-track { flex: 1; }

/* sheet tabs */
.tabbar {
  height: 28px;
  box-sizing: border-box;
  background: #e6e6e6;
  border-top: 1px solid #a6a6a6;
  display: flex;
  align-items: flex-start;
  flex: none;
}
.nav-arrows {
  width: 100px;
  flex: none;
  display: flex;
  gap: 24px;
  padding: 9px 0 0 27px;
  box-sizing: border-box;
}
.sheet-tabs {
  display: flex;
  padding-top: 2px;
  box-sizing: content-box;
  border-left: 1px solid #a6a6a6;
  border-right: 1px solid #a6a6a6;
  padding-right: 1px;
  margin-left: -1px;
  height: 22px;
}
.stab {
  flex: none;
  height: 22px;
  line-height: 21px;
  text-align: center;
  color: #333;
  white-space: nowrap;
  box-sizing: border-box;
}
.stab.plain { color: #555; border-right: 1px solid #b0b0b0; }
.stab.green { background: #c6e0b4; }
.stab.cream { background: #fff2cc; }
.stab.blue { background: #bdd7ee; }
.stab.purple { background: #7030a0; color: #fff; }
.stab.active {
  background: #fffbf0;
  color: #217346;
  font-weight: 700;
  border-bottom: 2px solid #217346;
  border-left: 1px solid #a6a6a6;
  border-right: 1px solid #a6a6a6;
  margin-top: -2px;
  height: 25px;
  line-height: 27px;
}
.add-tab { margin-left: 34px; padding-top: 5px; flex: none; }
.tab-dots { margin: 9px 0 0 46px; flex: none; }
.hscroll {
  margin: 6px 21px 0 14px;
  height: 15px;
  flex: 1;
  display: flex;
}
.hscroll .sb-btn { width: 15px; }
.sb-thumb.h { height: 15px; width: 423px; flex: none; border: 1px solid #ababab; border-left: none; background: #fff; }

/* status */
.status {
  flex: 1;
  background: #f1f1f1;
  border-top: 1px solid #c6c6c6;
  display: flex;
  align-items: center;
  padding-left: 8px;
  color: #444;
  font-size: 11px;
}
.ready { width: 56px; }
.views {
  margin-left: auto;
  display: flex;
  align-self: stretch;
}
.view {
  width: 38px;
  display: flex;
  align-items: center;
  justify-content: center;
}
.view.on { background: #d2d2d2; }
.zoom {
  display: flex;
  align-items: center;
  margin-left: 1px;
  width: 127px;
}
.z-btn { font-size: 16px; font-weight: 700; color: #666; width: 10px; text-align: center; flex: none; }
.z-track {
  position: relative;
  width: 99px;
  height: 1px;
  margin: 0 5px;
  background: #a6a6a6;
  flex: none;
}
.z-track i {
  position: absolute;
  left: 48px;
  top: -8px;
  width: 3px;
  height: 17px;
  background: #666;
}
.pct-zoom { width: 35px; margin-left: 15px; color: #555; }
</style>
